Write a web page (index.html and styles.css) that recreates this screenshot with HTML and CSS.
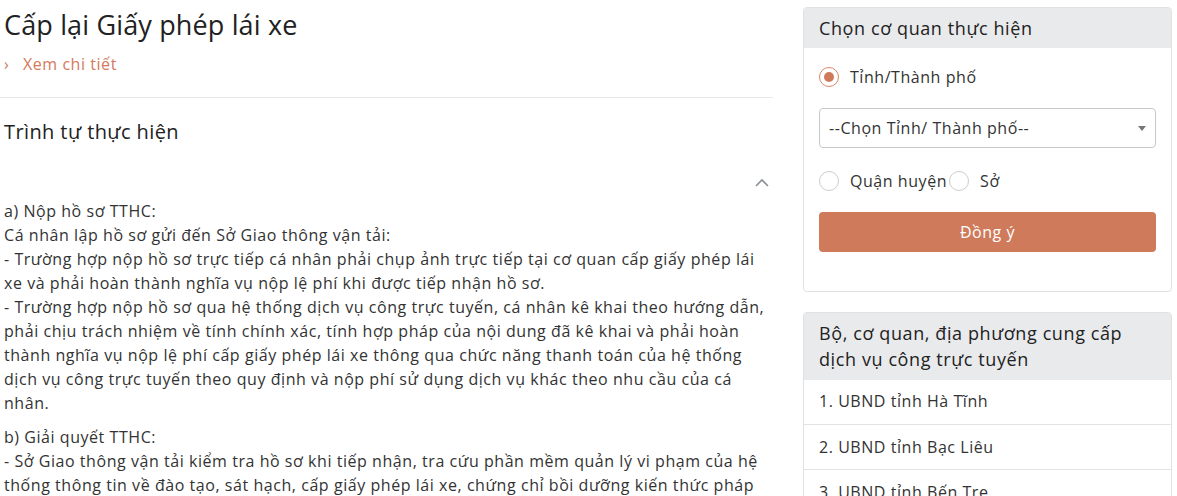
FILE: index.html
```html
<!DOCTYPE html>
<html lang="vi">
<head>
<meta charset="utf-8">
<title>Cấp lại Giấy phép lái xe</title>
<link rel="stylesheet" href="styles.css">
</head>
<body>
<div class="page">
  <main class="main">
    <h1 class="title">Cấp lại Giấy phép lái xe</h1>
    <a class="more" href="#"><span class="more-icon">›</span>Xem chi tiết</a>
    <hr class="divider">
    <h2 class="section-title">Trình tự thực hiện</h2>
    <div class="toggle-row">
      <svg class="chev" width="14" height="9" viewBox="0 0 14 9"><path d="M1 8 L7 2 L13 8" fill="none" stroke="#8a8f96" stroke-width="1.6"/></svg>
    </div>
    <div class="content">
      <p>a) Nộp hồ sơ TTHC:<br>Cá nhân lập hồ sơ gửi đến Sở Giao thông vận tải:<br>- Trường hợp nộp hồ sơ trực tiếp cá nhân phải chụp ảnh trực tiếp tại cơ quan cấp giấy phép lái xe và phải hoàn thành nghĩa vụ nộp lệ phí khi được tiếp nhận hồ sơ.<br>- Trường hợp nộp hồ sơ qua hệ thống dịch vụ công trực tuyến, cá nhân kê khai theo hướng dẫn, phải chịu trách nhiệm về tính chính xác, tính hợp pháp của nội dung đã kê khai và phải hoàn thành nghĩa vụ nộp lệ phí cấp giấy phép lái xe thông qua chức năng thanh toán của hệ thống dịch vụ công trực tuyến theo quy định và nộp phí sử dụng dịch vụ khác theo nhu cầu của cá nhân.</p>
      <p>b) Giải quyết TTHC:<br>- Sở Giao thông vận tải kiểm tra hồ sơ khi tiếp nhận, tra cứu phần mềm quản lý vi phạm của hệ thống thông tin về đào tạo, sát hạch, cấp giấy phép lái xe, chứng chỉ bồi dưỡng kiến thức pháp luật về giao thông đường bộ.</p>
    </div>
  </main>
  <aside class="side">
    <section class="card">
      <div class="card-head">Chọn cơ quan thực hiện</div>
      <div class="card-body">
        <label class="radio-row"><span class="radio checked"></span>Tỉnh/Thành phố</label>
        <div class="select">
          <span>--Chọn Tỉnh/ Thành phố--</span>
          <span class="caret"></span>
        </div>
        <div class="radio-line">
          <label class="radio-inline"><span class="radio"></span>Quận huyện</label>
          <label class="radio-inline"><span class="radio"></span>Sở</label>
        </div>
        <button class="btn">Đồng ý</button>
      </div>
    </section>
    <section class="card card-list">
      <div class="card-head two">Bộ, cơ quan, địa phương cung cấp dịch vụ công trực tuyến</div>
      <ul class="list">
        <li>1. UBND tỉnh Hà Tĩnh</li>
        <li>2. UBND tỉnh Bạc Liêu</li>
        <li>3. UBND tỉnh Bến Tre</li>
      </ul>
    </section>
  </aside>
</div>
</body>
</html>
```

FILE: styles.css
```css
* { box-sizing: border-box; }
html, body { margin: 0; padding: 0; background: #fff; }
body {
  font-family: "Open Sans", "Noto Sans", sans-serif;
  font-size: 16px;
  line-height: 24px;
  letter-spacing: 0.55px;
  color: #333;
  overflow: hidden;
  height: 496px;
}
.page {
  display: flex;
  gap: 30px;
  align-items: flex-start;
}
.main {
  width: 773px;
  flex: 0 0 773px;
}
.title {
  margin: 8px 0 0 4px;
  font-size: 27px;
  line-height: 34px;
  letter-spacing: 0.15px;
  font-weight: 400;
  color: #222;
}
.more {
  display: flex;
  align-items: center;
  margin: 10px 0 0 4px;
  color: #d4795a;
  text-decoration: none;
  font-size: 16px;
  line-height: 24px;
}
.more-icon {
  display: inline-block;
  width: 19px;
  font-size: 16px;
}
.divider {
  border: 0;
  border-top: 1px solid #e8e8e8;
  margin: 21px 0 0 0;
}
.section-title {
  margin: 20px 0 0 4px;
  font-size: 20px;
  line-height: 28px;
  letter-spacing: 0.4px;
  font-weight: 400;
  color: #222;
}
.toggle-row {
  display: flex;
  justify-content: flex-end;
  padding-right: 4px;
  margin-top: 29px;
  height: 24px;
}
.chev { display: block; margin-top: 3px; }
.content { padding-left: 4px; }
.content p { margin: 0 0 10px 0; }
.side {
  width: 369px;
  flex: 0 0 369px;
  padding-top: 7px;
  display: flex;
  flex-direction: column;
  gap: 20px;
}
.card {
  border: 1px solid #e1e1e1;
  border-radius: 4px;
  overflow: hidden;
  background: #fff;
}
.card-head {
  background: #e9eaec;
  padding: 7px 15px;
  font-size: 18px;
  line-height: 26px;
  letter-spacing: 0.6px;
  color: #222;
}
.card-head.two { padding: 7px 15px 8px 15px; }
.card-body {
  padding: 17px 15px 39px 15px;
}
.radio-row, .radio-inline {
  display: flex;
  align-items: center;
  gap: 11px;
  line-height: 24px;
}
.radio-line {
  display: flex;
  gap: 0;
  margin-top: 21px;
}
.radio-inline { margin-right: 2px; }
.radio {
  width: 20px;
  height: 20px;
  border: 1px solid #ccc;
  border-radius: 50%;
  display: inline-block;
  position: relative;
  flex: 0 0 20px;
}
.radio.checked { border-color: #d9876a; }
.radio.checked::after {
  content: "";
  position: absolute;
  left: 4px; top: 4px;
  width: 10px; height: 10px;
  border-radius: 50%;
  background: #cf7a5a;
}
.select {
  margin-top: 19px;
  height: 40px;
  border: 1px solid #c8c8c8;
  border-radius: 4px;
  display: flex;
  align-items: center;
  justify-content: space-between;
  padding: 0 9px 0 9px;
  color: #333;
}
.caret {
  width: 0; height: 0;
  border-left: 4px solid transparent;
  border-right: 4px solid transparent;
  border-top: 5px solid #777;
}
.btn {
  display: block;
  width: 100%;
  margin-top: 19px;
  height: 40px;
  border: 0;
  border-radius: 4px;
  background: #cf7a5a;
  color: #fff;
  font-family: inherit;
  font-size: 16px;
  letter-spacing: 0.55px;
}
.list {
  list-style: none;
  margin: 0;
  padding: 0;
}
.list li {
  padding: 10px 15px;
  height: 45px;
  border-top: 1px solid #e3e3e3;
}
.list li:first-child { border-top: 0; height: 44px; padding-top: 9px; }
```
